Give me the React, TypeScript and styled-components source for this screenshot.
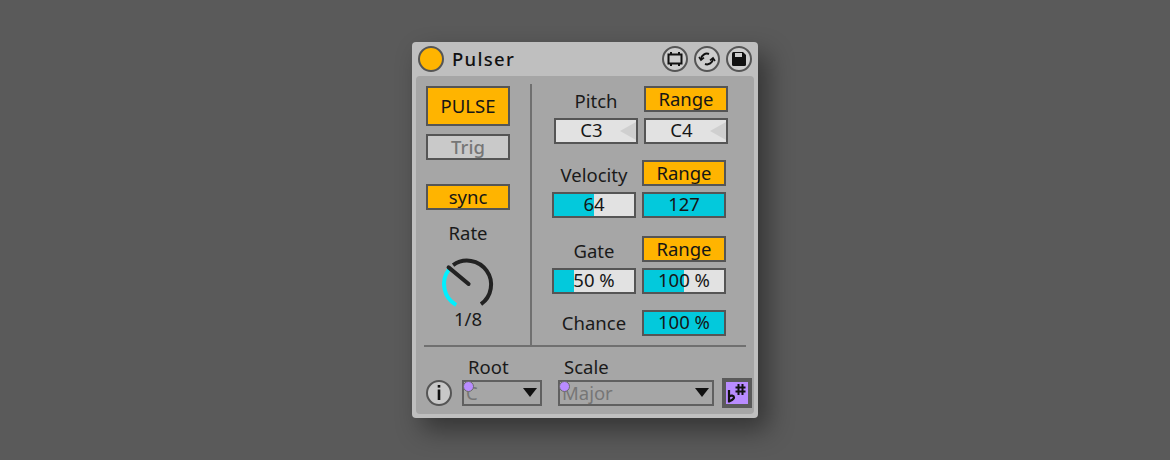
import React from "react";
import styled, { createGlobalStyle } from "styled-components";

const Global = createGlobalStyle`
  html, body { margin: 0; padding: 0; background: #5a5a5a; }
  body { font-family: "Noto Sans", "Liberation Sans", sans-serif; color: #161616; }
`;
const Page = styled.div`
  width: 1170px; height: 460px; display: flex; justify-content: center; padding-top: 42px; box-sizing: border-box; overflow: hidden;
`;
const Device = styled.div`
  width: 346px; height: 376px; box-sizing: border-box; background: #bfbfbf; border-radius: 4px;
  box-shadow: 10px 12px 26px rgba(0,0,0,.42); display: flex; flex-direction: column; padding: 0 4px 4px;
`;
const TitleBar = styled.div`
  height: 34px; display: flex; align-items: center; flex: none; padding: 0 2px;
`;
const Power = styled.div`
  width: 26px; height: 26px; box-sizing: border-box; border-radius: 50%; background: #ffb400; border: 2px solid #555; flex: none;
`;
const Title = styled.div`
  margin-left: 8px; font-size: 18.5px; font-weight: 500; letter-spacing: 1.3px; flex: 1; color: #111; padding-bottom: 1px;
`;
const IconRow = styled.div`
  display: flex; gap: 6px;
`;
const Round = styled.div`
  width: 26px; height: 26px; box-sizing: border-box; border-radius: 50%; background: #cdcdcd; border: 2px solid #555;
  display: flex; align-items: center; justify-content: center; flex: none;
`;
const Panel = styled.div`
  flex: 1; background: #a6a6a6; border-radius: 4px; padding: 8px 8px 0; display: flex; flex-direction: column;
`;
const Top = styled.div`
  height: 261px; display: flex; border-bottom: 2px solid #707070; flex: none; box-sizing: content-box;
`;
const Left = styled.div`
  width: 106px; box-sizing: border-box; padding: 2px 0 0 2px; display: flex; flex-direction: column; align-items: stretch; flex: none;
`;
const Toggle = styled.div<{ $on?: boolean; $h: number; $mt?: number }>`
  width: 84px; height: ${p => p.$h}px; margin-top: ${p => p.$mt ?? 0}px; box-sizing: border-box; border: 2px solid #555; flex: none;
  background: ${p => (p.$on ? "#ffb400" : "#c9c9c9")}; color: ${p => (p.$on ? "#161616" : "#767676")};
  display: flex; align-items: center; justify-content: center; font-size: 18.5px; line-height: 1;
  font-weight: ${p => (p.$on ? 400 : 500)};
`;
const CenterLabel = styled.div<{ $mt?: number }>`
  width: 84px; text-align: center; font-size: 18.5px; line-height: 22px; margin-top: ${p => p.$mt ?? 0}px; color: #1a1a1a;
`;
const KnobBox = styled.svg`
  display: block; width: 60px; height: 60px; margin: 10px 0 0 12px; flex: none;
`;
const VLine = styled.div`
  width: 2px; background: #707070; flex: none;
`;
const Right = styled.div`
  flex: 1; padding-top: 2px; display: flex; flex-direction: column;
`;
const Group = styled.div<{ $shift: number; $mt?: number }>`
  display: grid; grid-template-columns: 84px 84px; column-gap: 6px; row-gap: 6px; margin-left: ${p => p.$shift}px; margin-top: ${p => p.$mt ?? 0}px;
`;
const Label = styled.div`
  height: 26px; display: flex; align-items: center; justify-content: center; font-size: 18.5px; line-height: 1; padding-top: 5px; box-sizing: border-box; color: #1a1a1a;
`;
const ChanceLabel = styled(Label)`
  padding-top: 1px;
`;
const Field = styled.div<{ $fill?: number; $wedge?: boolean }>`
  height: 26px; box-sizing: border-box; border: 2px solid #555; position: relative; overflow: hidden;
  background: linear-gradient(to right, #03c9dc ${p => p.$fill ?? 0}%, #e2e2e2 ${p => p.$fill ?? 0}%);
  display: flex; align-items: center; justify-content: center; font-size: 18.5px; line-height: 1; color: #161616;
  padding: 0 ${p => (p.$wedge ? 9 : 0)}px 1px 0;
`;
const Wedge = styled.div`
  position: absolute; right: 0; top: 2px; width: 0; height: 0;
  border-top: 9px solid transparent; border-bottom: 9px solid transparent; border-right: 16px solid #cfcfcf;
`;
const Bottom = styled.div`
  display: flex; align-items: flex-end; padding: 0 0 6px 2px; flex: 1; margin-right: -6px;
`;
const Info = styled(Round)`
  background: #c8c8c8; margin-bottom: 2px; margin-right: 10px;
`;
const DropCol = styled.div<{ $w: number; $mr: number }>`
  width: ${p => p.$w}px; margin-right: ${p => p.$mr}px; display: flex; flex-direction: column; flex: none; margin-bottom: 2px;
`;
const DropLabel = styled.div<{ $pl: number }>`
  font-size: 18.5px; line-height: 22px; padding-left: ${p => p.$pl}px; margin-bottom: 2px; color: #1a1a1a;
`;
const Drop = styled.div`
  height: 26px; box-sizing: border-box; border: 2px solid #606060; position: relative; display: flex; align-items: center;
  font-size: 18.5px; line-height: 1; color: #767676; padding: 0 0 0 2px;
`;
const Dot = styled.div`
  position: absolute; left: -1px; top: -1px; width: 11px; height: 11px; box-sizing: border-box; border-radius: 50%; background: #b98cff; border: 1px solid #6b6b6b;
`;
const Arrow = styled.div`
  position: absolute; right: 3px; top: 6px; width: 0; height: 0;
  border-left: 7px solid transparent; border-right: 7px solid transparent; border-top: 9px solid #111;
`;
const ScaleBtn = styled.div`
  width: 30px; height: 30px; box-sizing: border-box; border: 4px solid #5a5a5a; background: #b98cff; flex: none; display: flex; align-items: center; justify-content: center;
`;

export default function App() {
  return (
    <Page>
      <Global />
      <Device>
        <TitleBar>
          <Power />
          <Title>Pulser</Title>
          <IconRow>
            <Round>
              <svg width="18" height="18" viewBox="0 0 18 18" fill="none" stroke="#111" strokeWidth="2">
                <rect x="2.5" y="4.5" width="13" height="9" />
                <path d="M5 2v3M13 2v3M5 13v3M13 13v3" />
              </svg>
            </Round>
            <Round>
              <svg width="18" height="18" viewBox="0 0 18 18" fill="none" stroke="#111" strokeWidth="2">
                <path d="M3 9a6 6 0 0 1 8-5" />
                <path d="M15 9a6 6 0 0 1-8 5" />
                <path d="M1 7l2 3 3-2.4M17 11l-2-3-3 2.4" strokeWidth="1.6" />
              </svg>
            </Round>
            <Round>
              <svg width="18" height="18" viewBox="0 0 18 18">
                <path d="M2 3.5A1.5 1.5 0 0 1 3.5 2H13l3 3v9.5a1.5 1.5 0 0 1-1.5 1.5h-11A1.5 1.5 0 0 1 2 14.5Z" fill="#111" />
                <rect x="5" y="3" width="7" height="4" fill="#cdcdcd" />
              </svg>
            </Round>
          </IconRow>
        </TitleBar>
        <Panel>
          <Top>
            <Left>
              <Toggle $on $h={40}>PULSE</Toggle>
              <Toggle $h={26} $mt={8}>Trig</Toggle>
              <Toggle $on $h={26} $mt={24}>sync</Toggle>
              <CenterLabel $mt={12}>Rate</CenterLabel>
              <KnobBox viewBox="0 0 60 60" fill="none" strokeWidth="4">
                <path d="M15.1 11.1A24 24 0 1 1 43 50.2" stroke="#222" />
                <path d="M11 15.4A24 24 0 0 0 18.2 50.9" stroke="#00f0ff" />
                <path d="M10.6 13.4L30.6 30" stroke="#222" strokeLinecap="round" />
              </KnobBox>
              <CenterLabel $mt={-6}>1/8</CenterLabel>
            </Left>
            <VLine />
            <Right>
              <Group $shift={22}>
                <Label>Pitch</Label>
                <Toggle $on $h={26}>Range</Toggle>
                <Field $wedge>C3<Wedge /></Field>
                <Field $wedge>C4<Wedge /></Field>
              </Group>
              <Group $shift={20} $mt={16}>
                <Label>Velocity</Label>
                <Toggle $on $h={26}>Range</Toggle>
                <Field $fill={50}>64</Field>
                <Field $fill={100}>127</Field>
              </Group>
              <Group $shift={20} $mt={18}>
                <Label>Gate</Label>
                <Toggle $on $h={26}>Range</Toggle>
                <Field $fill={25}>50 %</Field>
                <Field $fill={50}>100 %</Field>
              </Group>
              <Group $shift={20} $mt={16}>
                <ChanceLabel>Chance</ChanceLabel>
                <Field $fill={100}>100 %</Field>
              </Group>
            </Right>
          </Top>
          <Bottom>
            <Info>
              <svg width="22" height="22" viewBox="0 0 22 22" fill="#111"><rect x="9.7" y="7.5" width="2.6" height="10.5" /><rect x="9.7" y="3" width="2.6" height="2.6" /></svg>
            </Info>
            <DropCol $w={80} $mr={16}>
              <DropLabel $pl={6}>Root</DropLabel>
              <Drop>C<Dot /><Arrow /></Drop>
            </DropCol>
            <DropCol $w={156} $mr={8}>
              <DropLabel $pl={6}>Scale</DropLabel>
              <Drop>Major<Dot /><Arrow /></Drop>
            </DropCol>
            <ScaleBtn>
              <svg width="22" height="22" viewBox="0 0 22 22" fill="none" stroke="#111" strokeWidth="2">
                <path d="M3 8v12.5M3 14.5c2-1.5 5-1.2 5 1 0 2-3 3-5 4" strokeWidth="2.2" />
                <path d="M12.5 2v11M16.5 2v11M9.5 5.5h10M9.5 9.5h10" />
              </svg>
            </ScaleBtn>
          </Bottom>
        </Panel>
      </Device>
    </Page>
  );
}
